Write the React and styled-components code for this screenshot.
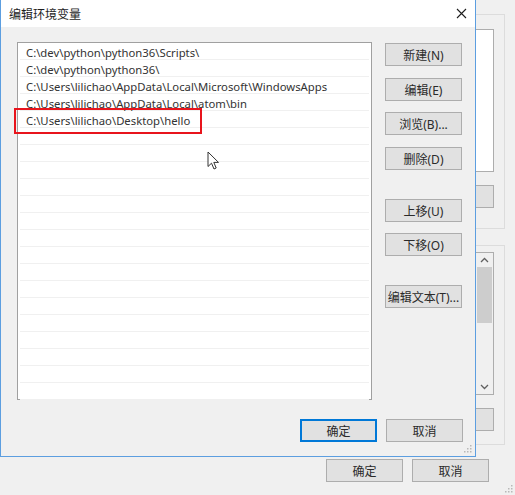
import React from "react";
import styled, { createGlobalStyle } from "styled-components";

const GlobalStyle = createGlobalStyle`
  html, body {
    margin: 0;
    padding: 0;
    background: #f0f0f0;
  }
  body {
    font-family: "Noto Sans", "Noto Sans CJK SC", sans-serif;
    font-size: 12px;
    color: #1e1e1e;
  }
`;

const FONT = `"Noto Sans", "Noto Sans CJK SC", sans-serif`;

// parent window (env vars) mostly hidden behind the dialog
const Desktop = styled.div`
  position: relative;
  width: 515px;
  height: 495px;
  overflow: hidden;
  background: #f0f0f0;
`;

const ParentBody = styled.div`
  display: flex;
  flex-direction: column;
  align-items: flex-end;
  padding: 14px 10px 0 0;
`;

const GroupBox = styled.div`
  width: 260px;
  height: ${(p) => p.h}px;
  margin-top: ${(p) => p.mt || 0}px;
  border: 1px solid #dcdcdc;
  border-left: none;
  display: flex;
  flex-direction: column;
  align-items: flex-end;
  padding: ${(p) => p.pt}px 10px 0 0;
  box-sizing: border-box;
`;

const WhiteBox = styled.div`
  width: 246px;
  height: ${(p) => p.h}px;
  background: #fff;
  border: 1px solid #adadad;
  box-sizing: border-box;
  display: flex;
  justify-content: flex-end;
`;

const ScrollTrack = styled.div`
  width: 17px;
  height: 100%;
  display: flex;
  flex-direction: column;
  align-items: center;
  background: #f0f0f0;
`;

const ScrollArrow = styled.div`
  height: 14px;
  display: flex;
  align-items: center;
  justify-content: center;
`;

const ScrollThumb = styled.div`
  width: 15px;
  height: 56px;
  background: #cdcdcd;
`;

const ScrollSpace = styled.div`
  flex: 1;
`;

const Btn = styled.button`
  width: ${(p) => p.w || 77}px;
  height: 23px;
  margin-top: ${(p) => p.mt || 0}px;
  padding: 0;
  background: #e1e1e1;
  border: 1px solid ${(p) => (p.primary ? "#0078d7" : "#adadad")};
  box-shadow: ${(p) => (p.primary ? "inset 0 0 0 1px #0078d7" : "none")};
  font-family: ${FONT};
  font-size: 12px;
  color: #2a2a2a;
  box-sizing: border-box;
  flex-shrink: 0;
`;

const ParentFooter = styled.div`
  position: absolute;
  left: 0;
  right: 0;
  bottom: 13px;
  display: flex;
  justify-content: flex-end;
  gap: 9px;
  padding-right: 26px;
`;

const Grip = styled.svg`
  position: absolute;
  right: ${(p) => p.r}px;
  bottom: ${(p) => p.b}px;
`;

// the dialog
const Dialog = styled.div`
  position: absolute;
  left: 0;
  top: -1px;
  width: 476px;
  height: 458px;
  background: #f0f0f0;
  border: 1px solid #5c9ee0;
  box-sizing: border-box;
  display: flex;
  flex-direction: column;
`;

const TitleBar = styled.div`
  height: 27px;
  background: #fff;
  display: flex;
  align-items: center;
  justify-content: space-between;
  padding: 0 7px 0 8px;
  flex-shrink: 0;
`;

const Title = styled.span`
  font-family: "Noto Sans CJK SC", sans-serif;
  font-size: 12px;
  color: #1e1e1e;
  margin-top: -1px;
`;

const CloseBtn = styled.div`
  width: 14px;
  height: 14px;
  display: flex;
  align-items: center;
  justify-content: center;
`;

const DialogBody = styled.div`
  display: flex;
  padding: 15px 12px 0 16px;
  gap: 13px;
`;

const ListBox = styled.div`
  position: relative;
  width: 355px;
  height: 358px;
  background: #fff;
  border: 1px solid #a0a0a0;
  box-sizing: border-box;
`;

const Row = styled.div`
  height: 17px;
  line-height: 15px;
  padding: 2px 0 0 6px;
  margin: 0 2px;
  border-bottom: 1px solid #f0f0f0;
  box-sizing: border-box;
  font-family: ${FONT};
  font-size: 11.3px;
  color: #333;
  white-space: nowrap;
`;

const Highlight = styled.div`
  position: absolute;
  left: -4px;
  top: 65px;
  width: 188px;
  height: 26px;
  border: 2px solid #e8141c;
  box-sizing: border-box;
`;

const BtnColumn = styled.div`
  display: flex;
  flex-direction: column;
`;

const DialogFooter = styled.div`
  display: flex;
  justify-content: flex-end;
  gap: 9px;
  padding: 19px 12px 0 0;
`;

const Cursor = styled.svg`
  position: absolute;
  left: 207px;
  top: 151px;
`;

const paths = [
  "C:\\dev\\python\\python36\\Scripts\\",
  "C:\\dev\\python\\python36\\",
  "C:\\Users\\lilichao\\AppData\\Local\\Microsoft\\WindowsApps",
  "C:\\Users\\lilichao\\AppData\\Local\\atom\\bin",
  "C:\\Users\\lilichao\\Desktop\\hello",
];

const buttons = [
  { label: "新建(N)", mt: 1 },
  { label: "编辑(E)", mt: 12 },
  { label: "浏览(B)...", mt: 11 },
  { label: "删除(D)", mt: 12 },
  { label: "上移(U)", mt: 29 },
  { label: "下移(O)", mt: 11 },
  { label: "编辑文本(T)...", mt: 29 },
];

const GripDots = () => (
  <svg width="8" height="8" viewBox="0 0 8 8">
    <rect x="6" y="0" width="1.5" height="1.5" fill="#b8b8b8" />
    <rect x="3" y="3" width="1.5" height="1.5" fill="#b8b8b8" />
    <rect x="6" y="3" width="1.5" height="1.5" fill="#b8b8b8" />
    <rect x="0" y="6" width="1.5" height="1.5" fill="#b8b8b8" />
    <rect x="3" y="6" width="1.5" height="1.5" fill="#b8b8b8" />
    <rect x="6" y="6" width="1.5" height="1.5" fill="#b8b8b8" />
  </svg>
);

const App = () => {
  const emptyRows = Array.from({ length: 16 });
  return (
    <>
      <GlobalStyle />
      <Desktop>
        <ParentBody>
          <GroupBox h={215} pt={14}>
            <WhiteBox h={143} />
            <Btn w={246} mt={13} />
          </GroupBox>
          <GroupBox h={200} pt={6} mt={16}>
            <WhiteBox h={143}>
              <ScrollTrack>
                <ScrollArrow>
                  <svg width="9" height="6" viewBox="0 0 9 6">
                    <path d="M1 5 L4.5 1.5 L8 5" stroke="#606060" strokeWidth="1.3" fill="none" />
                  </svg>
                </ScrollArrow>
                <ScrollThumb />
                <ScrollSpace />
                <ScrollArrow>
                  <svg width="9" height="6" viewBox="0 0 9 6">
                    <path d="M1 1 L4.5 4.5 L8 1" stroke="#606060" strokeWidth="1.3" fill="none" />
                  </svg>
                </ScrollArrow>
              </ScrollTrack>
            </WhiteBox>
            <Btn w={246} mt={13} />
          </GroupBox>
        </ParentBody>
        <ParentFooter>
          <Btn>确定</Btn>
          <Btn>取消</Btn>
        </ParentFooter>
        <Grip r={2} b={2} width="8" height="8">
          <GripDots />
        </Grip>

        <Dialog>
          <TitleBar>
            <Title>编辑环境变量</Title>
            <CloseBtn>
              <svg width="11" height="11" viewBox="0 0 11 11">
                <path d="M1 1 L10 10 M10 1 L1 10" stroke="#1e1e1e" strokeWidth="1.1" />
              </svg>
            </CloseBtn>
          </TitleBar>
          <DialogBody>
            <ListBox>
              {paths.map((p) => (
                <Row key={p}>{p}</Row>
              ))}
              {emptyRows.map((_, i) => (
                <Row key={i} />
              ))}
              <Highlight />
            </ListBox>
            <BtnColumn>
              {buttons.map((b) => (
                <Btn key={b.label} mt={b.mt}>
                  {b.label}
                </Btn>
              ))}
            </BtnColumn>
          </DialogBody>
          <DialogFooter>
            <Btn primary>确定</Btn>
            <Btn>取消</Btn>
          </DialogFooter>
          <Grip r={3} b={3} width="8" height="8">
            <GripDots />
          </Grip>
        </Dialog>

        <Cursor width="13" height="20" viewBox="0 0 13 20">
          <path
            d="M1 1 L1 15.5 L4.5 12.2 L7 18 L9.2 17 L6.8 11.4 L11.5 11.4 Z"
            fill="#fff"
            stroke="#333"
            strokeWidth="1"
            strokeLinejoin="round"
          />
        </Cursor>
      </Desktop>
    </>
  );
};

export default App;
